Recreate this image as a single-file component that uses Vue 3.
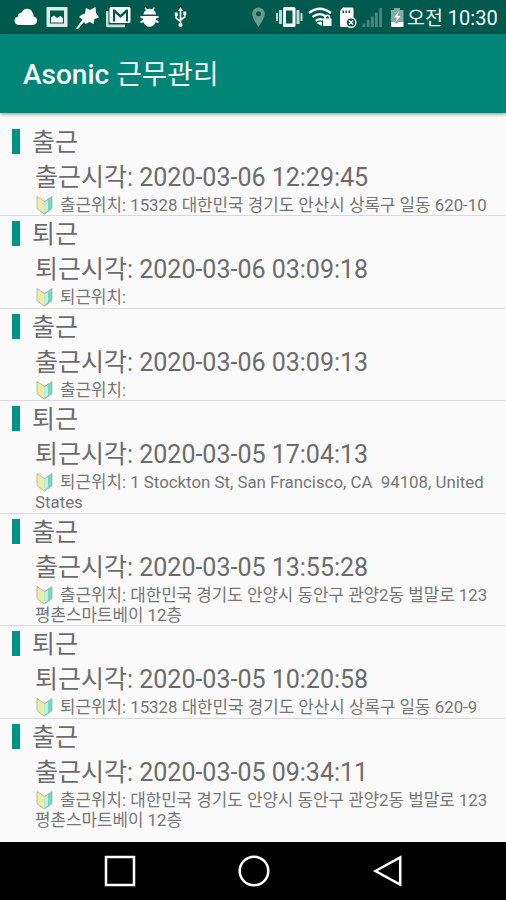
<script setup>
const records = [
  { type: '출근', time: '2020-03-06 12:29:45', place: ['15328 대한민국 경기도 안산시 상록구 일동 620-10'] },
  { type: '퇴근', time: '2020-03-06 03:09:18', place: [''] },
  { type: '출근', time: '2020-03-06 03:09:13', place: [''] },
  { type: '퇴근', time: '2020-03-05 17:04:13', place: ['1 Stockton St, San Francisco, CA  94108, United', 'States'] },
  { type: '출근', time: '2020-03-05 13:55:28', place: ['대한민국 경기도 안양시 동안구 관양2동 벌말로 123', '평촌스마트베이 12층'] },
  { type: '퇴근', time: '2020-03-05 10:20:58', place: ['15328 대한민국 경기도 안산시 상록구 일동 620-9'] },
  { type: '출근', time: '2020-03-05 09:34:11', place: ['대한민국 경기도 안양시 동안구 관양2동 벌말로 123', '평촌스마트베이 12층'] },
]
</script>

<template>
  <div class="screen">
    <header class="status">
      <svg class="glyphs" width="200" height="34" viewBox="0 0 200 34" fill="#fff">
        <path d="M18.500 25a4.200 4.200 0 0 1-.6-8.300a4 4 0 0 1 4-4.200a5.500 5.500 0 0 1 10.200-.5a5 5 0 0 1 1.500 4.500a4.300 4.300 0 0 1-.8 8.500z" />
        <path fill-rule="evenodd" d="M46.500 7h21v20h-21zM50 10.500v13h14v-13z" fill="#dce9e6" />
        <path d="M51 22.500v-5l3-2 3 2.500 3.500-2 2.500 2v4.500z" />
        <path d="M76 28.500l6.500-9-3.500-2.500 3-2.500 3-1 1-5.500 4 2 5.500-3 .5 6 3 4.500-4.500 1.500-1 5-4-2-4 2-1.500-2-6 7z" />
        <path d="M106 11h2.500v13.500h16.500v2.700h-17.500q-1.500 0-1.500-1.500z" opacity=".8" />
        <path fill-rule="evenodd" d="M111 7h18q1.500 0 1.500 1.500v13q0 1.500-1.500 1.500h-18q-1.500 0-1.500-1.500v-13q0-1.500 1.500-1.500zM113 9.500v12h2v-8.500l5.500 5 5.500-5v8.500h2v-12h-2l-5.500 5.200-5.500-5.200z" />
        <path d="M143.500 14.500a6 5.500 0 0 1 2.500-4.500l-1.500-2 1-.7 1.700 2a7 7 0 0 1 5 0l1.700-2 1 .7-1.500 2a6 5.500 0 0 1 2.600 4.500z" />
        <path d="M140.500 16h18v2l-2.500.5v1.500l2.500 1v2l-3-.8q-2 4.500-6 4.500t-6-4.500l-3 .8v-2l2.500-1v-1.500l-2.500-.5z" />
        <g fill="none" stroke="#e8f2f0" stroke-width="1.700">
          <path d="M180.500 10v15M180.500 21.500l-4.300-3.500v-3.500M180.500 20l4.300-3v-3" />
        </g>
        <path d="M180.500 7l2.600 4h-5.200zM174.800 12.500h3V16h-3zM183.300 11.500h3v3.500h-3z" />
        <circle cx="180.500" cy="25" r="2.100" />
      </svg>
      <div class="right">
        <svg width="157" height="34" viewBox="250 0 157 34" fill="#fff">
          <path fill="#679b91" fill-rule="evenodd" d="M258.500 7.500a6.300 6.300 0 0 1 6.300 6.300c0 4.700-6.300 13.200-6.300 13.200s-6.300-8.500-6.300-13.200a6.300 6.300 0 0 1 6.300-6.300zM258.500 11.200a2.500 2.500 0 1 0 0 5a2.500 2.500 0 1 0 0-5z" />
          <path fill-rule="evenodd" d="M284.500 7h9.500q1.500 0 1.500 1.500v17q0 1.500-1.500 1.500h-9.500q-1.500 0-1.500-1.500v-17q0-1.500 1.500-1.500zM286 10.500v13h6.500v-13z" />
          <path fill="#c1d7d2" d="M279 10h3v14h-3zM276 13h2v8h-2zM296.500 10h3v14h-3zM300.500 13h2v8h-2z" />
          <g fill="none" stroke="#fff" stroke-width="2.300">
            <path d="M309 13q10.500-8.500 22 0M312.500 17q7.500-5.800 14 0M315.800 20.800q4-3 7-.8" />
          </g>
          <path d="M316.500 23l5.500 3v-4q-2.500-1.500-5.500 1z" />
          <path fill-rule="evenodd" d="M323 18.500h1.300v-1a3 3 0 0 1 6 0v1h1.200V26H323zM325.800 18.500h3v-1a1.500 1.500 0 0 0-3 0z" />
          <path d="M340 11l3-3.500h9q1.500 0 1.500 1.500v18h-12q-1.500 0-1.500-1.500z" />
          <path fill="#00594d" d="M342.500 10.500h1.500v2.500h-1.500zM345.500 10.500h1.500v2.500h-1.500zM348.500 10.500h1.500v2.500h-1.500z" />
          <circle cx="351" cy="22.500" r="4.800" fill="#00594d" stroke="#fff" stroke-width="1.400" />
          <path d="M349 20.500l4 4m0-4l-4 4" stroke="#fff" stroke-width="1.400" />
          <path fill="#4b877d" d="M362.500 23.500h2.800V27h-2.800zM366.700 20h2.800v7h-2.800zM370.900 16.500h2.800V27h-2.800zM375 12.500h2.800V27H375zM379.200 8h2.800v19h-2.800z" />
          <path fill="#86aaa3" d="M391 10h3V8h6v2h3.500v13H391z" />
          <path d="M391 22h3l2 1.500 3-1.500h4.500v5H391zM399 11l-5 6.500h3l-1.500 5 5-6.500h-3z" />
        </svg>
        <span class="clock"><span class="ampm">오전</span> 10:30</span>
      </div>
    </header>

    <div class="appbar"><h1>Asonic <span>근무관리</span></h1></div>

    <main class="list">
      <article v-for="(r, i) in records" :key="i" class="item">
        <div class="head"><i class="bar"></i><span>{{ r.type }}</span></div>
        <div class="time">{{ r.type }}시각: {{ r.time }}</div>
        <div v-for="(line, n) in r.place" :key="n" class="place">
          <template v-if="n === 0">
            <svg class="mark" width="18" height="20" viewBox="0 0 18 20">
              <path d="M2 1.500L9.500 6.500V19L3.500 15Q2 14 2 12.500z" fill="#f1eda0" />
              <path d="M17 1.500L9.500 6.500V19L15.500 15Q17 14 17 12.500z" fill="#79d3c0" />
              <path d="M9.500 7v11l3.500-2.800V5z" fill="#baf2e8" />
              <path d="M2 1.500L9.500 6.500L17 1.500V12.500Q17 14 15.500 15L9.500 19L3.500 15Q2 14 2 12.500z" fill="none" stroke="#a3b3a0" stroke-width=".8" />
            </svg>
            <span>{{ r.type }}위치: {{ line }}</span>
          </template>
          <template v-else>{{ line }}</template>
        </div>
      </article>
    </main>

    <nav class="nav">
      <svg width="32" height="32" viewBox="0 0 32 32"><rect x="2" y="2" width="28" height="28" /></svg>
      <svg width="32" height="32" viewBox="0 0 32 32"><circle cx="16" cy="16" r="14.300" /></svg>
      <svg width="32" height="32" viewBox="0 0 32 32"><path d="M3.500 16L28.200 2.300V29.700z" /></svg>
    </nav>
  </div>
</template>

<style>
body {
  margin: 0;
}
</style>

<style scoped>
.screen {
  width: 506px;
  height: 900px;
  display: flex;
  flex-direction: column;
  overflow: hidden;
  background: #fafafa;
  color: #6c6c6c;
  font-family: Roboto, "Noto Sans CJK KR", sans-serif;
}
.status {
  flex: none;
  height: 34px;
  display: flex;
  justify-content: space-between;
  background: #00594d;
}
.right {
  display: flex;
  width: 256px;
}
.right svg {
  flex: none;
}
.clock {
  color: #f3faf8;
  font-size: 20px;
  line-height: 37px;
  white-space: nowrap;
}
.ampm {
  font-size: 19.5px;
}
.appbar {
  flex: none;
  height: 79px;
  box-sizing: border-box;
  display: flex;
  align-items: center;
  padding: 2px 0 0 23px;
  background: #008577;
  box-shadow: 0 1px 4px rgba(0, 0, 0, 0.45);
}
h1 {
  margin: 0;
  color: #f4fbfa;
  font-size: 28px;
  line-height: 40px;
  font-weight: 500;
  white-space: nowrap;
}
h1 span {
  font-weight: 400;
  font-size: 27.8px;
}
.list {
  flex: 1;
  min-height: 0;
  padding-top: 10.5px;
  overflow: hidden;
}
.item {
  padding-bottom: 0.5px;
  border-bottom: 1px solid #d9d9d9;
}
.item:last-child {
  border-bottom: 0;
}
.head {
  height: 37px;
  display: flex;
  align-items: flex-start;
  gap: 12px;
  padding-left: 12px;
  font-size: 25px;
  line-height: 38px;
}
.bar {
  width: 8px;
  height: 25px;
  margin-top: 5px;
  background: #009484;
}
.time {
  height: 34px;
  padding-left: 35px;
  font-size: 25px;
  line-height: 34px;
  white-space: pre;
}
.place {
  height: 20px;
  display: flex;
  padding-left: 35px;
  color: #767676;
  font-size: 16.83px;
  line-height: 20px;
  white-space: pre;
}
.mark {
  flex: none;
  margin-right: 7px;
}
.nav {
  flex: none;
  height: 58px;
  box-sizing: border-box;
  display: flex;
  justify-content: center;
  align-items: center;
  gap: 102px;
  padding-left: 1px;
  background: #000;
}
.nav svg {
  fill: none;
  stroke: #fff;
  stroke-width: 2.5;
}
</style>
